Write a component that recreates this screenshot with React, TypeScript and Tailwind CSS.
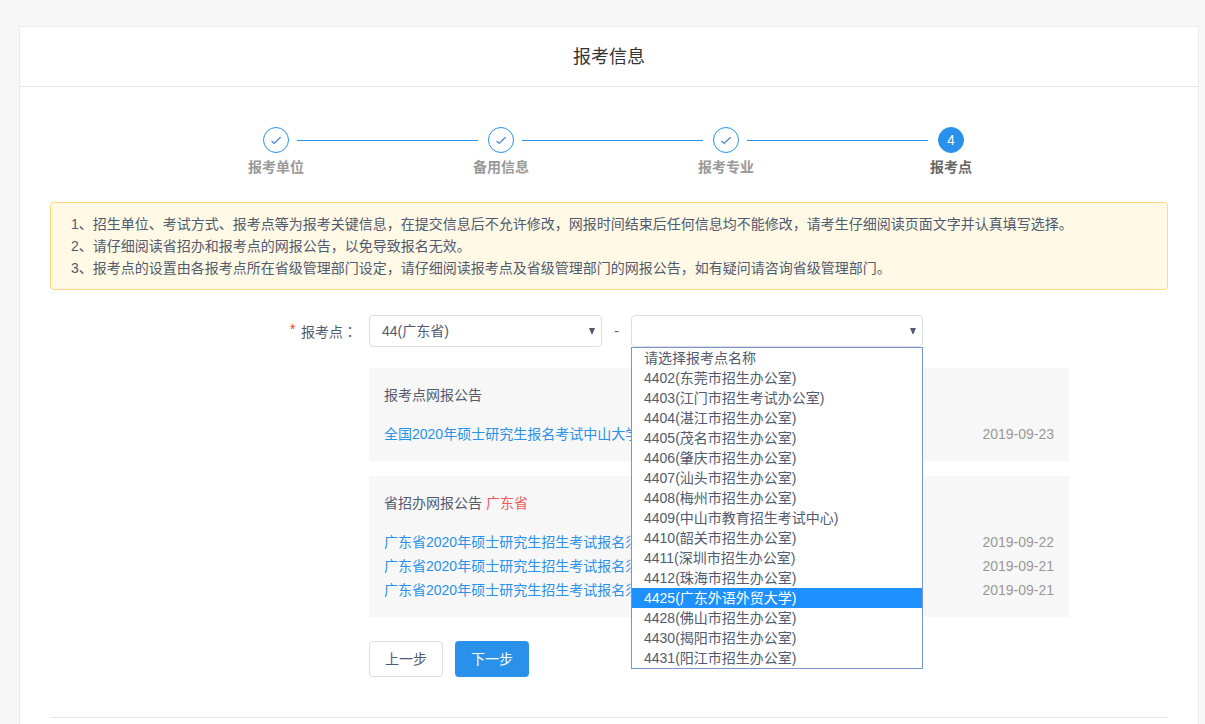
import { useState } from "react"
import clsx from "clsx"

const steps = ["报考单位", "备用信息", "报考专业", "报考点"]
const currentStep = 3

const notices = [
  "1、招生单位、考试方式、报考点等为报考关键信息，在提交信息后不允许修改，网报时间结束后任何信息均不能修改，请考生仔细阅读页面文字并认真填写选择。",
  "2、请仔细阅读省招办和报考点的网报公告，以免导致报名无效。",
  "3、报考点的设置由各报考点所在省级管理部门设定，请仔细阅读报考点及省级管理部门的网报公告，如有疑问请咨询省级管理部门。",
]

const sites = [
  "请选择报考点名称",
  "4402(东莞市招生办公室)",
  "4403(江门市招生考试办公室)",
  "4404(湛江市招生办公室)",
  "4405(茂名市招生办公室)",
  "4406(肇庆市招生办公室)",
  "4407(汕头市招生办公室)",
  "4408(梅州市招生办公室)",
  "4409(中山市教育招生考试中心)",
  "4410(韶关市招生办公室)",
  "4411(深圳市招生办公室)",
  "4412(珠海市招生办公室)",
  "4425(广东外语外贸大学)",
  "4428(佛山市招生办公室)",
  "4430(揭阳市招生办公室)",
  "4431(阳江市招生办公室)",
]

interface Announcement {
  title: string
  date: string
}

const siteAnnouncements: Announcement[] = [
  { title: "全国2020年硕士研究生报名考试中山大学", date: "2019-09-23" },
]

const provinceAnnouncements: Announcement[] = [
  { title: "广东省2020年硕士研究生招生考试报名须知", date: "2019-09-22" },
  { title: "广东省2020年硕士研究生招生考试报名须知", date: "2019-09-21" },
  { title: "广东省2020年硕士研究生招生考试报名须知", date: "2019-09-21" },
]

export default function App() {
  const [active, setActive] = useState(12)

  return (
    <div className="flex min-h-screen flex-col bg-[#f7f7f7] pt-[26px] pr-1.5 pl-[19px] font-['Liberation_Sans','Noto_Sans_CJK_SC',sans-serif] text-sm text-[#515a6e]">
      <main className="flex-1 border border-b-0 border-[#ebebeb] bg-white">
        <h1 className="border-b border-[#e6e6e6] pt-0.5 text-center text-lg leading-[57px] text-[#333]">
          报考信息
        </h1>

        <div className="px-[30px] pt-10">
          <Steps />

          <div className="mt-[25px] rounded border border-[#ffd77a] bg-[#fff9e6] px-5 py-2.5 leading-[22px]">
            {notices.map((notice) => (
              <p key={notice}>{notice}</p>
            ))}
          </div>

          <form
            className="mt-[25px] flex border-b border-[#e6e6e6] pb-10"
            onSubmit={(e) => e.preventDefault()}
          >
            <label
              htmlFor="province"
              className="flex h-8 w-[319px] shrink-0 items-center justify-end gap-1 pr-3"
            >
              <span className="font-['Liberation_Mono',monospace] text-[#ed4014]">
                *
              </span>
              <span>
                报考点
                <span className="font-['Noto_Sans_CJK_JP',sans-serif]">：</span>
              </span>
            </label>

            <div className="max-w-[700px] flex-1">
              <div className="flex items-center">
                <div className="grid w-[233px] items-center">
                  <select
                    id="province"
                    className="col-start-1 row-start-1 h-8 appearance-none rounded border border-[#dcdee2] bg-white px-3"
                  >
                    <option>44(广东省)</option>
                  </select>
                  <Arrow />
                </div>
                <span className="w-[29px] text-center">-</span>
                <div className="relative grid w-[292px] items-center">
                  <select
                    aria-label="报考点名称"
                    className="col-start-1 row-start-1 h-8 appearance-none rounded border border-[#dcdee2] bg-white px-3"
                  >
                    <option></option>
                  </select>
                  <Arrow />
                  {/* open option list */}
                  <ul
                    role="listbox"
                    aria-label="报考点名称"
                    className="absolute inset-x-0 top-full z-10 border border-[#7596d2] bg-white leading-5"
                  >
                    {sites.map((site, i) => (
                      <li
                        key={site}
                        role="option"
                        aria-selected={i === active}
                        onMouseEnter={() => setActive(i)}
                        className={clsx(
                          "px-3",
                          i === active && "bg-[#1e90ff] text-white"
                        )}
                      >
                        {site}
                      </li>
                    ))}
                  </ul>
                </div>
              </div>

              <div className="mt-[21px] space-y-[15px]">
                <Panel title="报考点网报公告" items={siteAnnouncements} />
                <Panel
                  title="省招办网报公告"
                  region="广东省"
                  items={provinceAnnouncements}
                />
              </div>

              <div className="mt-6 flex gap-3">
                <button
                  type="button"
                  className="h-9 w-[74px] rounded border border-[#dcdee2] bg-white"
                >
                  上一步
                </button>
                <button
                  type="submit"
                  className="h-9 w-[74px] rounded bg-[#2991ea] text-white"
                >
                  下一步
                </button>
              </div>
            </div>
          </form>
        </div>
      </main>
    </div>
  )
}

function Steps() {
  return (
    <div className="pl-[9px]">
      <ol className="mx-auto flex max-w-[731px] font-bold">
        {steps.map((step, i) => {
          const current = i === currentStep
          return (
            <li key={step} className={clsx("flex", !current && "flex-1")}>
              <div className="flex w-14 shrink-0 flex-col items-center">
                <span
                  className={clsx(
                    "flex size-[26px] items-center justify-center rounded-full border border-[#2991ea] font-normal",
                    current && "bg-[#2991ea] text-white"
                  )}
                >
                  {current ? i + 1 : <Check />}
                </span>
                <span
                  className={clsx(
                    "mt-1 whitespace-nowrap leading-5",
                    current ? "text-[#666]" : "text-[#999]"
                  )}
                >
                  {step}
                </span>
              </div>
              {!current && (
                <div className="mt-[13px] -mr-[5px] -ml-[7px] h-px flex-1 bg-[#2991ea]" />
              )}
            </li>
          )
        })}
      </ol>
    </div>
  )
}

function Panel({
  title,
  region,
  items,
}: {
  title: string
  region?: string
  items: Announcement[]
}) {
  return (
    <section className="bg-[#f7f7f7] p-[15px] leading-6">
      <h2>
        {title}
        {region && <span className="text-[#f0595b]"> {region}</span>}
      </h2>
      <ul className="mt-[15px]">
        {items.map((item, i) => (
          <li key={i} className="flex justify-between">
            <a href="#" className="text-[#2991ea]">
              {item.title}
            </a>
            <time className="text-[#999]">{item.date}</time>
          </li>
        ))}
      </ul>
    </section>
  )
}

function Check() {
  return (
    <svg
      viewBox="0 0 12 12"
      className="size-3"
      fill="none"
      stroke="#4a86e0"
      strokeWidth="1.3"
    >
      <path d="M1.6 7 L4.1 9.4 L10.6 3.2" />
    </svg>
  )
}

function Arrow() {
  return (
    <svg
      viewBox="0 0 6 6"
      className="pointer-events-none col-start-1 row-start-1 mr-[7px] size-1.5 justify-self-end"
      fill="#515a6e"
    >
      <path d="M0 0h6L3.5 6h-1z" />
    </svg>
  )
}
